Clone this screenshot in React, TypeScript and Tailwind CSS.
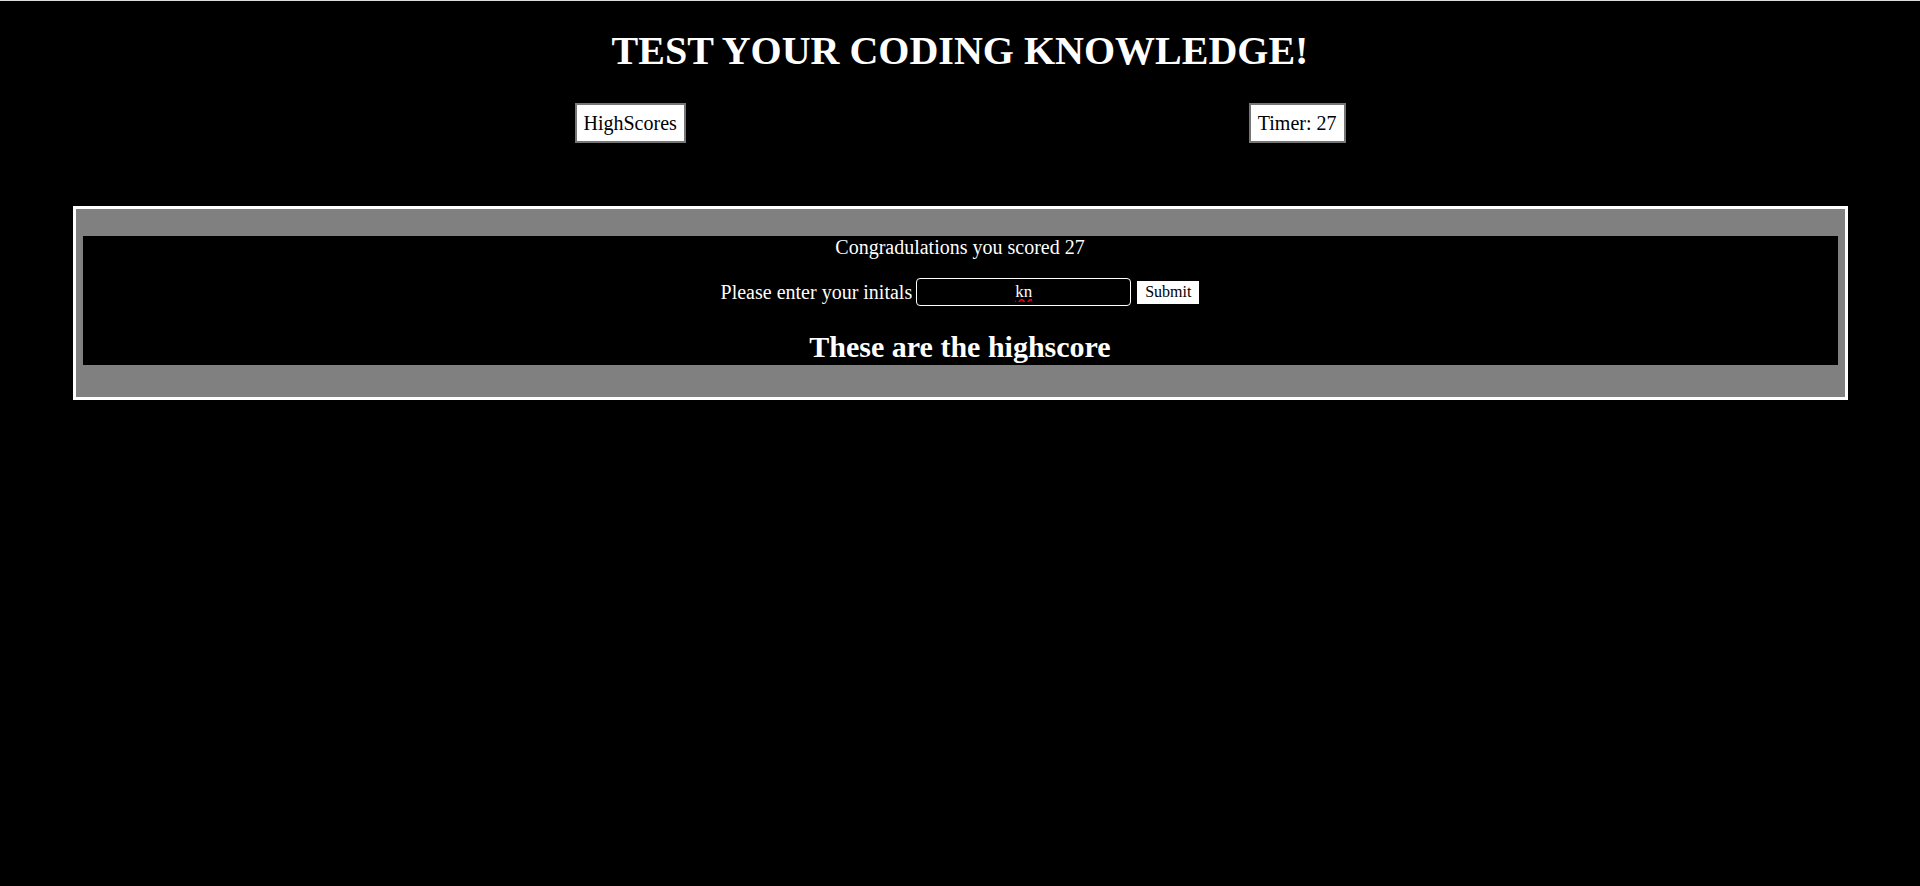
import React from "react";

export default function App() {
  const score = 27;

  return (
    <div className="min-h-screen bg-black text-white font-['Liberation_Serif','Times_New_Roman',serif] border-t border-[#dcdcdc]">
      {/* Titre */}
      <h1 className="mt-[28px] text-center text-[40px] leading-[44px] font-bold">
        TEST YOUR CODING KNOWLEDGE!
      </h1>

      {/* Boutons du haut */}
      <div className="mt-[30px] mx-auto w-[771px] flex justify-between">
        <button className="bg-white text-black border-2 border-[#767676] px-[7px] py-[7px] text-[20px] leading-[22px]">
          HighScores
        </button>
        <div className="bg-white text-black border-2 border-[#767676] px-[7px] py-[7px] text-[20px] leading-[22px]">
          Timer: {score}
        </div>
      </div>

      {/* Carte du score */}
      <div className="mt-[63px] mx-auto w-[1775px] border-[3px] border-white bg-[#808080] pt-[27px] pb-[32px] px-[7px]">
        <div className="bg-black flex flex-col items-center pb-[2px]">
          <p className="text-[20px] leading-[23px]">Congradulations you scored {score}</p>

          <div className="mt-[19px] flex items-center h-[28px]">
            <label className="text-[20px] leading-[23px]">Please enter your initals</label>
            <input
              defaultValue="kn"
              className="ml-[4px] w-[215px] h-[28px] border border-white rounded-[4px] bg-black text-white text-center text-[17px] underline decoration-wavy decoration-red-600 outline-none"
            />
            <button className="ml-[6px] bg-white text-black text-[16px] leading-[18px] h-[23px] px-[8px]">
              Submit
            </button>
          </div>

          <h2 className="mt-[24px] text-[30px] leading-[33px] font-bold">These are the highscore</h2>
        </div>
      </div>
    </div>
  );
}
